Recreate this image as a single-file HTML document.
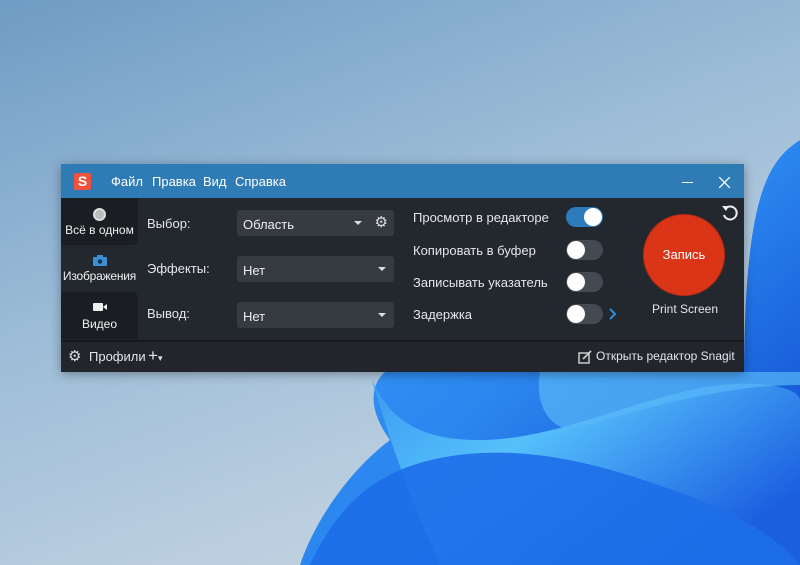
<!DOCTYPE html>
<html><head><meta charset="utf-8"><style>
*{margin:0;padding:0;box-sizing:border-box}
body{width:800px;height:565px;overflow:hidden;position:relative;font-family:"Liberation Sans","DejaVu Sans",sans-serif;background:linear-gradient(160deg,#6f9cc4 0%,#9cbcd7 40%,#bccfe0 75%,#c9d6e2 100%)}
.bg{position:absolute;left:0;top:0}
.win{position:absolute;left:61px;top:164px;width:683px;height:208px;background:#23272e;box-shadow:0 2px 10px rgba(0,0,0,.35)}
.title{height:34px;background:#2f7bb6;position:relative;color:#fff;font-size:13px}
.logo{position:absolute;left:13px;top:9px;width:17px;height:17px;background:#f0533c;border-radius:2px;color:#fff;font-weight:bold;font-size:14px;text-align:center;line-height:17px}
.menu{position:absolute;top:10px;}
.t{position:absolute;color:#e4e6e8;font-size:13px;white-space:nowrap}
.tab{position:absolute;left:0;width:77px;height:47px;background:#1a1d21;color:#f0f0f0;font-size:12px;text-align:center;white-space:nowrap}
.dd{position:absolute;left:176px;width:157px;height:26px;background:#363b42;border-radius:3px;color:#eee;font-size:13px;padding:7px 6px}
.arr{position:absolute;right:8px;top:11px;width:0;height:0;border-left:4px solid transparent;border-right:4px solid transparent;border-top:4px solid #ddd}
.tg{position:absolute;left:505px;width:37px;height:20px;border-radius:10px;background:#444a51}
.tg i{position:absolute;top:1px;left:1px;width:18px;height:18px;border-radius:50%;background:#fff}
.tg.on{background:#2d7bba}.tg.on i{left:18px}
.bar{position:absolute;left:0;top:176px;width:683px;height:32px;background:#22252b;border-top:2px solid #17191c}
</style></head><body>
<svg class="bg" width="800" height="565" viewBox="0 0 800 565">
<defs>
<linearGradient id="g1" x1="0" y1="0" x2="1" y2="1"><stop offset="0" stop-color="#3aa0f5"/><stop offset=".5" stop-color="#2b86ef"/><stop offset="1" stop-color="#0a3fc9"/></linearGradient>
<linearGradient id="g2" x1="0" y1="0" x2="1" y2="0.6"><stop offset="0" stop-color="#3b9af0"/><stop offset=".4" stop-color="#56c0fb"/><stop offset="1" stop-color="#1b5fe0"/></linearGradient>
</defs>
<path d="M800 140 C770 160 745 190 744 372 L385 372 C370 385 368 410 390 440 C350 470 315 520 300 565 L800 565 Z" fill="url(#g1)"/>
<path d="M372 380 C390 420 420 440 480 440 C560 440 640 395 720 385 C770 380 800 390 800 400 L800 565 L440 565 C420 520 395 460 372 380 Z" fill="url(#g2)"/>
<path d="M310 565 C340 500 380 470 440 458 C530 440 620 470 700 500 C750 520 785 545 800 565 Z" fill="#1d6ee8" opacity=".9"/>
<path d="M540 372 C535 400 545 425 570 430 C640 410 720 385 800 385 L800 372 Z" fill="#58b8f8" opacity=".7"/>
</svg>
<div class="win">
 <div class="title"><div class="logo">S</div>
  <span class="menu" style="left:50px">Файл</span><span class="menu" style="left:91px">Правка</span><span class="menu" style="left:142px">Вид</span><span class="menu" style="left:174px">Справка</span>
  <div style="position:absolute;left:621px;top:18px;width:11px;height:1px;background:#fff"></div>
  <svg style="position:absolute;left:658px;top:13px" width="11" height="11"><path d="M0 0L11 11M11 0L0 11" stroke="#fff" stroke-width="1.3"/></svg>
 </div>
 <div class="tab" style="top:34px;border-radius:0 0 6px 0">
  <div style="margin:10px auto 0;width:13px;height:13px;border-radius:50%;border:2px solid #ddd;background:#bbb"></div><div style="margin-top:2px">Всё в одном</div></div>
 <div class="tab" style="top:81px;background:#23272e">
  <svg style="margin-top:10px" width="14" height="11"><rect x="0" y="2" width="14" height="9" rx="1" fill="#3a8fd6"/><rect x="4" y="0" width="6" height="3" fill="#3a8fd6"/><circle cx="7" cy="6.5" r="2.3" fill="#1b3550"/></svg><div style="margin-top:0px;letter-spacing:-0.2px">Изображения</div></div>
 <div class="tab" style="top:128px;border-radius:0 6px 0 0">
  <svg style="margin-top:10px" width="14" height="10"><rect x="0" y="1" width="10" height="8" rx="1" fill="#eee"/><path d="M10 5L14 2V8Z" fill="#eee"/></svg><div style="margin-top:2px">Видео</div></div>
 <span class="t" style="left:86px;top:52px">Выбор:</span>
 <span class="t" style="left:86px;top:97px">Эффекты:</span>
 <span class="t" style="left:86px;top:142px">Вывод:</span>
 <div class="dd" style="top:46px;">Область<div class="arr" style="right:32px"></div><span style="position:absolute;right:6px;top:3px;font-size:15px;color:#ddd">⚙</span></div>
 <div class="dd" style="top:92px">Нет<div class="arr"></div></div>
 <div class="dd" style="top:138px">Нет<div class="arr"></div></div>
 <span class="t" style="left:352px;top:46px">Просмотр в редакторе</span>
 <span class="t" style="left:352px;top:79px">Копировать в буфер</span>
 <span class="t" style="left:352px;top:111px">Записывать указатель</span>
 <span class="t" style="left:352px;top:143px">Задержка</span>
 <div class="tg on" style="top:43px"><i></i></div>
 <div class="tg" style="top:76px"><i></i></div>
 <div class="tg" style="top:108px"><i></i></div>
 <div class="tg" style="top:140px"><i></i></div>
 <svg style="position:absolute;left:548px;top:144px" width="8" height="12"><path d="M1 1L6 6L1 11" stroke="#2d8fd8" stroke-width="2" fill="none"/></svg>
 <svg style="position:absolute;left:660px;top:40px" width="18" height="18"><path d="M4 5A6.5 6.5 0 1 1 3 11" stroke="#eee" stroke-width="2" fill="none"/><path d="M1 2L5 7L8 2Z" fill="#eee"/></svg>
 <div style="position:absolute;left:583px;top:51px;width:80px;height:80px;border-radius:50%;background:#db3517;box-shadow:0 0 0 1px #b52a12;color:#fff;font-size:13px;text-align:center;line-height:80px">Запись</div>
 <span class="t" style="left:591px;top:138px;font-size:12px">Print Screen</span>
 <div class="bar">
  <span style="position:absolute;left:7px;top:5px;color:#ddd;font-size:15px">⚙</span>
  <span class="t" style="left:28px;top:7px">Профили</span>
  <span class="t" style="left:87px;top:4px;font-size:17px">+<span style="font-size:9px">▾</span></span>
  <svg style="position:absolute;left:517px;top:8px" width="14" height="14"><rect x="1" y="3" width="10" height="10" fill="none" stroke="#ccc" stroke-width="1.5"/><path d="M5 9L13 1" stroke="#ccc" stroke-width="1.8"/></svg>
  <span class="t" style="left:535px;top:7px;font-size:12px">Открыть редактор Snagit</span>
 </div>
</div>
</body></html>
